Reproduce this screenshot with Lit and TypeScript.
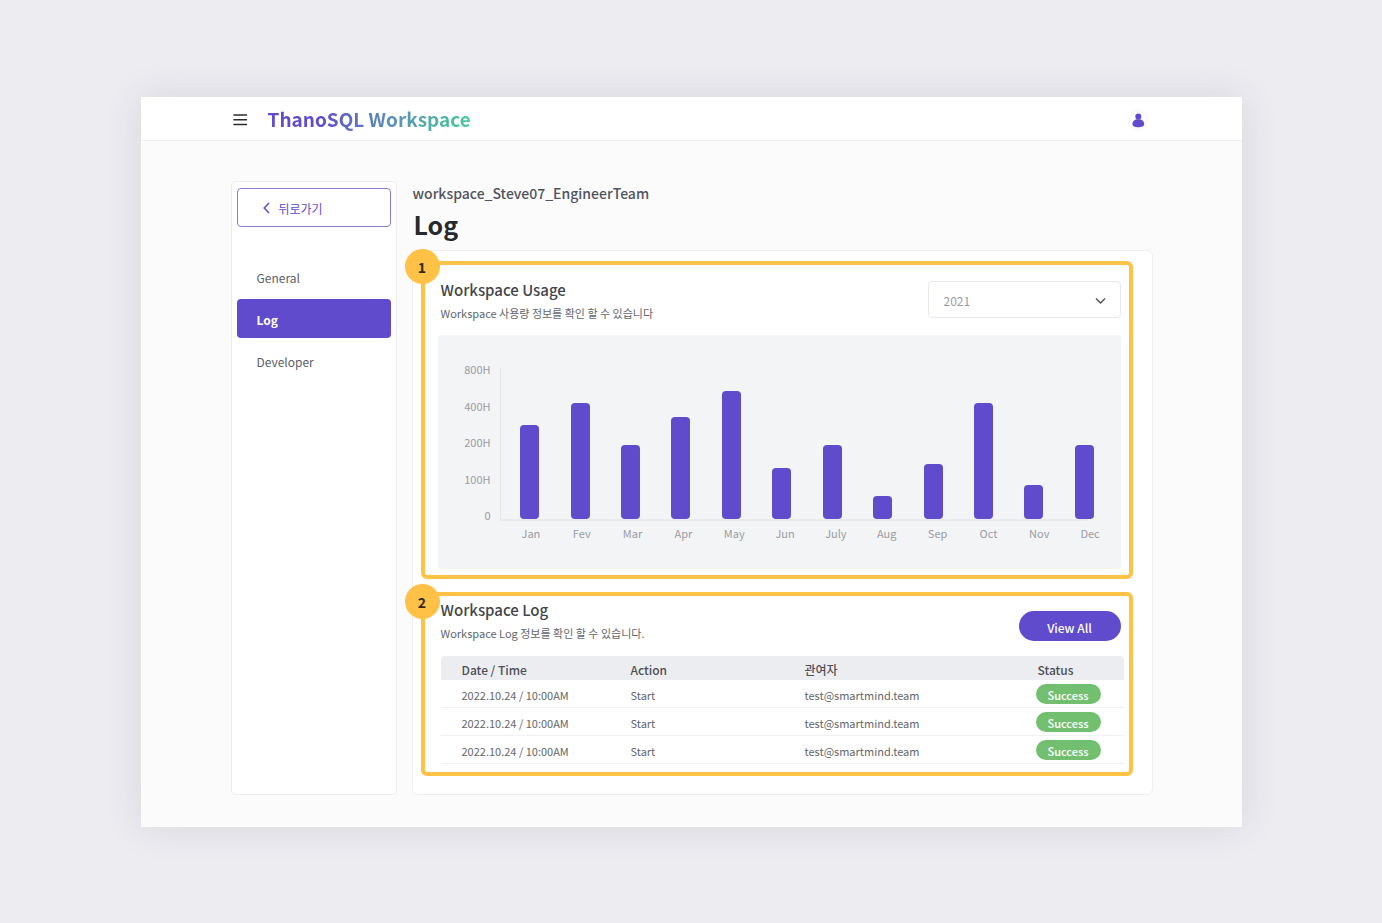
import { LitElement, html, css } from "lit";
import { customElement, state } from "lit/decorators.js";
import { classMap } from "lit/directives/class-map.js";

const base = css`
  :host {
    display: block;
    box-sizing: border-box;
  }
  *,
  *::before,
  *::after {
    box-sizing: border-box;
  }
  h1,
  h2,
  p {
    margin: 0;
  }
  button,
  select {
    font: inherit;
    margin: 0;
  }
`;

@customElement("app-header")
class AppHeader extends LitElement {
  static styles = [
    base,
    css`
      .header {
        background: #fff;
        border-bottom: 1px solid #f0f0f2;
      }
      .inner {
        display: flex;
        align-items: center;
        max-width: 920px;
        height: 43px;
        margin: 0 auto;
      }
      .menu,
      .user {
        display: flex;
        align-items: center;
        justify-content: center;
        padding: 0;
        border: 0;
        background: none;
      }
      .menu {
        width: 18px;
        height: 18px;
      }
      .brand {
        margin-left: 18px;
        padding-top: 1px;
        font-size: 19px;
        line-height: 28px;
        font-weight: 700;
        text-decoration: none;
        color: transparent;
        background: linear-gradient(90deg, #5f4bcc 25%, #5a8cb8 58%, #4acb98 100%);
        -webkit-background-clip: text;
        background-clip: text;
      }
      .user {
        width: 16px;
        height: 16px;
        margin: 3px 6px 0 auto;
        border-radius: 50%;
        background: #fff;
        box-shadow: 0 0 6px rgba(0, 0, 0, 0.08);
      }
    `,
  ];

  render() {
    return html`
      <header class="header">
        <div class="inner">
          <button class="menu" aria-label="Menu">
            <svg width="18" height="18" viewBox="0 0 18 18" stroke="#2a2d30" stroke-width="1.4" stroke-linecap="round">
              <path d="M1.900 5h12.600M1.900 9.700h12.600M1.900 14.500h12.600" />
            </svg>
          </button>
          <a class="brand" href="#">ThanoSQL Workspace</a>
          <button class="user" aria-label="Account">
            <svg width="16" height="16" viewBox="0 0 16 16" fill="#5f4bcc">
              <circle cx="8.300" cy="4.500" r="3" />
              <path d="M6.300 7.300h4c2.300.8 3.900 2.600 3.900 4.700 0 2.100-2.500 3.200-5.900 3.200s-5.900-1.100-5.900-3.200C2.400 9.900 4 8.100 6.300 7.300z" />
            </svg>
          </button>
        </div>
      </header>
    `;
  }
}

@customElement("side-nav")
class SideNav extends LitElement {
  @state() current = "Log";
  private items = ["General", "Log", "Developer"];

  static styles = [
    base,
    css`
      .nav {
        height: 100%;
        padding: 6px 5px;
        background: #fff;
        border: 1px solid #ececee;
        border-radius: 4px;
      }
      .back {
        display: flex;
        align-items: center;
        gap: 8px;
        width: 100%;
        height: 39px;
        padding: 0 24px;
        border: 1px solid #8a7bdb;
        border-radius: 4px;
        background: #fff;
        color: #5f4bcc;
        font-size: 12px;
        line-height: 18px;
      }
      .label {
        padding-top: 2px;
      }
      .list {
        display: grid;
        gap: 3px;
        margin: 30px 0 0;
        padding: 0;
        list-style: none;
      }
      .link {
        display: block;
        padding: 11px 20px 9px;
        border-radius: 4px;
        color: #5c6068;
        font-size: 12px;
        line-height: 19px;
        text-decoration: none;
      }
      .active {
        background: #5f4bcc;
        color: #fff;
        font-weight: 700;
      }
    `,
  ];

  render() {
    return html`
      <nav class="nav">
        <button class="back">
          <svg width="9" height="12" viewBox="0 0 9 12" fill="none" stroke="#5f4bcc" stroke-width="1.5">
            <path d="M7 1 2.200 6 7 11" />
          </svg>
          <span class="label">뒤로가기</span>
        </button>
        <ul class="list">
          ${this.items.map(
            (item) => html`<li>
              <a
                href="#"
                class=${classMap({ link: true, active: item === this.current })}
                @click=${(e: Event) => {
                  e.preventDefault();
                  this.current = item;
                }}
                >${item}</a
              >
            </li>`
          )}
        </ul>
      </nav>
    `;
  }
}

@customElement("usage-chart")
class UsageChart extends LitElement {
  private ticks = ["800H", "400H", "200H", "100H", "0"];
  private data: [string, number][] = [
    ["Jan", 94],
    ["Fev", 116],
    ["Mar", 74],
    ["Apr", 102],
    ["May", 128],
    ["Jun", 51],
    ["July", 74],
    ["Aug", 23],
    ["Sep", 55],
    ["Oct", 116],
    ["Nov", 34],
    ["Dec", 74],
  ];

  static styles = [
    base,
    css`
      .chart {
        display: grid;
        grid-template-columns: 53px 1fr;
        column-gap: 9px;
        padding: 26px 5px 28px 0;
        border-radius: 4px;
        background: #f3f4f6;
        color: #999ca2;
        font-size: 11px;
        line-height: 16px;
      }
      .ticks {
        display: flex;
        flex-direction: column;
        justify-content: space-between;
        text-align: right;
      }
      .plot {
        display: grid;
        grid-template-columns: repeat(12, 1fr);
        align-items: end;
        justify-items: center;
        height: 153px;
        margin: 7px 6px 2px 0;
        padding: 0 0 2px 4px;
        border-left: 1px solid #e4e5e8;
        background: linear-gradient(#e9eaec, #e9eaec) left bottom / calc(100% - 23px) 2px no-repeat;
      }
      .bar {
        width: 19px;
        border-radius: 4px;
        background: #5f4bcc;
      }
      .months {
        grid-column: 2;
        display: grid;
        grid-template-columns: repeat(12, 1fr);
        margin-top: 2px;
        padding-left: 6px;
        text-align: center;
      }
    `,
  ];

  render() {
    return html`
      <div class="chart">
        <div class="ticks">${this.ticks.map((t) => html`<span>${t}</span>`)}</div>
        <div class="plot">
          ${this.data.map(([, v]) => html`<div class="bar" style="height:${v}px"></div>`)}
        </div>
        <div class="months">${this.data.map(([m]) => html`<span>${m}</span>`)}</div>
      </div>
    `;
  }
}

@customElement("log-table")
class LogTable extends LitElement {
  private rows = Array.from({ length: 3 }, () => ({
    date: "2022.10.24 / 10:00AM",
    action: "Start",
    user: "test@smartmind.team",
    status: "Success",
  }));

  static styles = [
    base,
    css`
      .table {
        width: 100%;
        border-collapse: separate;
        border-spacing: 0;
        table-layout: fixed;
        color: #63666d;
        font-size: 11px;
        line-height: 16px;
      }
      th {
        height: 24px;
        padding: 4px 0 0;
        background: #ecedf1;
        color: #4d5056;
        font-size: 12px;
        line-height: 20px;
        font-weight: 500;
        text-align: left;
      }
      td {
        height: 28px;
        padding: 3px 0 0;
        border-bottom: 1px solid #f0f1f3;
      }
      th:first-child {
        padding-left: 21px;
        border-top-left-radius: 4px;
      }
      td:first-child {
        padding-left: 21px;
      }
      th:last-child {
        border-top-right-radius: 4px;
      }
      .date {
        width: 190px;
      }
      .action {
        width: 174px;
      }
      .status {
        width: 88px;
        padding-left: 2px;
      }
      td:last-child {
        padding-top: 0;
      }
      .pill {
        display: block;
        width: 65px;
        height: 20px;
        padding-top: 2px;
        border-radius: 10px;
        background: #72bf6f;
        color: #fff;
        font-weight: 500;
        text-align: center;
        line-height: 19px;
      }
    `,
  ];

  render() {
    return html`
      <table class="table">
        <thead>
          <tr>
            <th class="date" scope="col">Date / Time</th>
            <th class="action" scope="col">Action</th>
            <th scope="col">관여자</th>
            <th class="status" scope="col">Status</th>
          </tr>
        </thead>
        <tbody>
          ${this.rows.map(
            (r) => html`<tr>
              <td>${r.date}</td>
              <td>${r.action}</td>
              <td>${r.user}</td>
              <td><span class="pill">${r.status}</span></td>
            </tr>`
          )}
        </tbody>
      </table>
    `;
  }
}

@customElement("app-root")
class AppRoot extends LitElement {
  static styles = [
    base,
    css`
      :host {
        min-height: 100vh;
        padding: 97px 140px 96px 141px;
        background: #edecf1;
        font-family: "Noto Sans CJK KR", "Noto Sans", sans-serif;
        color: #43464c;
      }
      .window {
        background: #fbfbfb;
        box-shadow: 0 0 36px rgba(60, 55, 80, 0.12);
      }
      .layout {
        display: grid;
        grid-template-columns: 166px minmax(0, 1fr);
        column-gap: 15px;
        max-width: 922px;
        margin: 0 auto;
        padding: 40px 0 32px;
      }
      .name {
        padding-left: 1px;
        font-size: 14px;
        line-height: 24px;
        font-weight: 500;
        color: #51545b;
      }
      .title {
        padding-left: 2px;
        font-size: 25px;
        line-height: 38px;
        font-weight: 700;
        color: #26292d;
      }
      .card {
        display: grid;
        gap: 13px;
        margin-top: 7px;
        padding: 10px 19px 18px 8px;
        border: 1px solid #f0f0f2;
        border-radius: 6px;
        background: #fff;
      }
      .section {
        position: relative;
        border: 4px solid #ffc247;
        border-radius: 6px;
      }
      .usage {
        padding: 16px 8px 6px 13px;
      }
      .log {
        padding: 5px 5px 8px 16px;
      }
      .step {
        position: absolute;
        left: -20px;
        width: 35px;
        height: 35px;
        border-radius: 50%;
        background: #ffc247;
        color: #33290f;
        font-size: 14px;
        line-height: 36px;
        font-weight: 700;
        text-align: center;
      }
      .usage .step {
        top: -16px;
      }
      .log .step {
        top: -12px;
      }
      .head {
        display: flex;
        justify-content: space-between;
      }
      .usage .head {
        align-items: flex-start;
        margin-bottom: 14px;
        padding-left: 3px;
      }
      .log .head {
        align-items: flex-end;
        margin-bottom: 15px;
        padding-right: 3px;
      }
      .heading {
        margin-bottom: 6px;
        font-size: 15px;
        line-height: 18px;
        font-weight: 500;
      }
      .sub {
        font-size: 11px;
        line-height: 16px;
        color: #63666d;
      }
      .picker {
        position: relative;
        width: 193px;
      }
      .year {
        display: block;
        width: 100%;
        height: 37px;
        padding: 2px 15px 0;
        border: 1px solid #e6e8ed;
        border-radius: 4px;
        background: #fff;
        color: #999ca2;
        font-size: 12px;
        appearance: none;
      }
      .chevron {
        position: absolute;
        right: 15px;
        top: 15px;
        pointer-events: none;
      }
      .all {
        width: 102px;
        height: 30px;
        padding: 2px 0 0;
        border: 0;
        border-radius: 15px;
        background: #5f4bcc;
        color: #fff;
        font-size: 12px;
        font-weight: 500;
      }
    `,
  ];

  render() {
    return html`
      <div class="window">
        <app-header></app-header>
        <div class="layout">
          <side-nav></side-nav>
          <main>
            <p class="name">workspace_Steve07_EngineerTeam</p>
            <h1 class="title">Log</h1>
            <div class="card">
              <section class="section usage">
                <span class="step">1</span>
                <div class="head">
                  <div>
                    <h2 class="heading">Workspace Usage</h2>
                    <p class="sub">Workspace 사용량 정보를 확인 할 수 있습니다</p>
                  </div>
                  <div class="picker">
                    <select class="year" aria-label="Year">
                      <option>2021</option>
                    </select>
                    <svg class="chevron" width="11" height="9" viewBox="0 0 11 9" fill="none" stroke="#4d5056" stroke-width="1.4">
                      <path d="M1 2.500l4.500 4.500L10 2.500" />
                    </svg>
                  </div>
                </div>
                <usage-chart></usage-chart>
              </section>
              <section class="section log">
                <span class="step">2</span>
                <div class="head">
                  <div>
                    <h2 class="heading">Workspace Log</h2>
                    <p class="sub">Workspace Log 정보를 확인 할 수 있습니다.</p>
                  </div>
                  <button class="all">View All</button>
                </div>
                <log-table></log-table>
              </section>
            </div>
          </main>
        </div>
      </div>
    `;
  }
}
